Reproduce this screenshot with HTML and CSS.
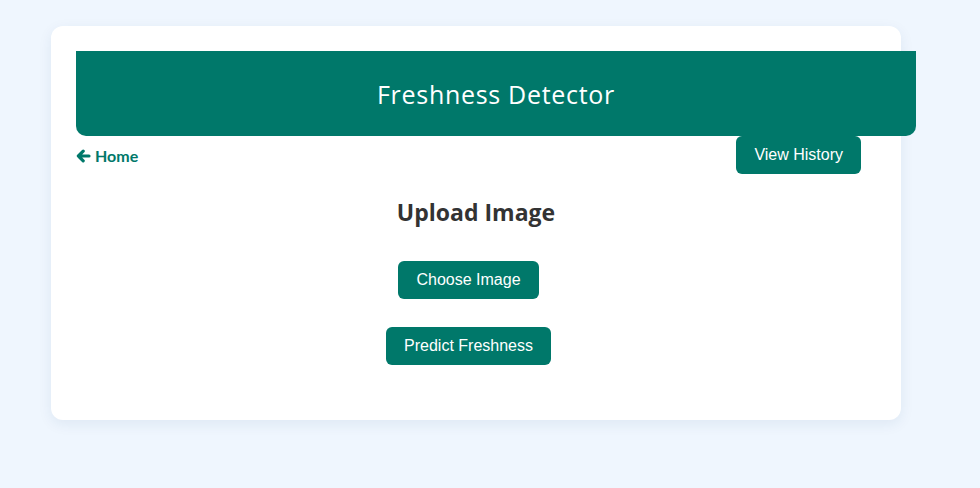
FILE: index.html
```html
<!DOCTYPE html>
<html>
<head>
<meta charset="utf-8">
<link rel="stylesheet" href="styles.css">
</head>
<body>
<div class="card">
  <header class="banner"><h1 class="title">Freshness Detector</h1></header>
  <div class="nav">
    <a class="home" href="#"><svg class="arrow" viewBox="0 0 15 14" width="15" height="14"><path d="M7.2 2.2 L2.4 7 L7.2 11.8 M2.4 7 H13" fill="none" stroke="#00786a" stroke-width="3.2" stroke-linecap="round" stroke-linejoin="round"/></svg>Home</a>
    <button class="btn history">View History</button>
  </div>
  <h2 class="heading">Upload Image</h2>
  <div class="actions">
    <div class="row"><button class="btn offset">Choose Image</button></div>
    <div class="row"><button class="btn offset">Predict Freshness</button></div>
  </div>
</div>
</body>
</html>
```
FILE: styles.css
```css
html, body { margin: 0; padding: 0; }
body {
  background: #eff6fe;
  font-family: Lato, "Open Sans", sans-serif;
  padding: 26px 0 0 51px;
  height: 488px;
  box-sizing: border-box;
}
.card {
  width: 850px;
  box-sizing: border-box;
  background: #fff;
  border-radius: 12px;
  padding: 25px;
  box-shadow: 0 4px 14px rgba(30, 60, 120, 0.08);
}
.banner {
  width: 100%;
  height: 85px;
  padding: 0 20px;
  background: #00786a;
  border-radius: 0 0 10px 10px;
  display: flex;
  align-items: center;
  justify-content: center;
}
.title {
  margin: 0;
  color: #fff;
  font-family: "Open Sans", sans-serif;
  font-weight: 400;
  font-size: 25px;
  letter-spacing: 0.7px;
}
.nav {
  display: flex;
  justify-content: space-between;
  align-items: center;
}
.home {
  display: flex;
  align-items: center;
  gap: 4px;
  color: #00786a;
  font-weight: 700;
  font-size: 16px;
  text-decoration: none;
  margin-top: 1px;
}
.btn {
  background: #00786a;
  color: #fff;
  border: none;
  border-radius: 6px;
  font-family: "Liberation Sans", Arial, sans-serif;
  font-size: 16px;
  line-height: 18px;
  padding: 10px 18px;
}
.history { margin-right: 15px; }
.heading {
  text-align: center;
  margin: 23px 0 0;
  color: #333;
  font-family: "Open Sans", sans-serif;
  font-size: 23px;
  font-weight: 700;
  line-height: 30px;
}
.actions {
  display: flex;
  flex-direction: column;
  gap: 28px;
  margin: 34px 0 30px;
}
.row { display: flex; justify-content: center; }
.offset { margin-right: 15px; }
```
